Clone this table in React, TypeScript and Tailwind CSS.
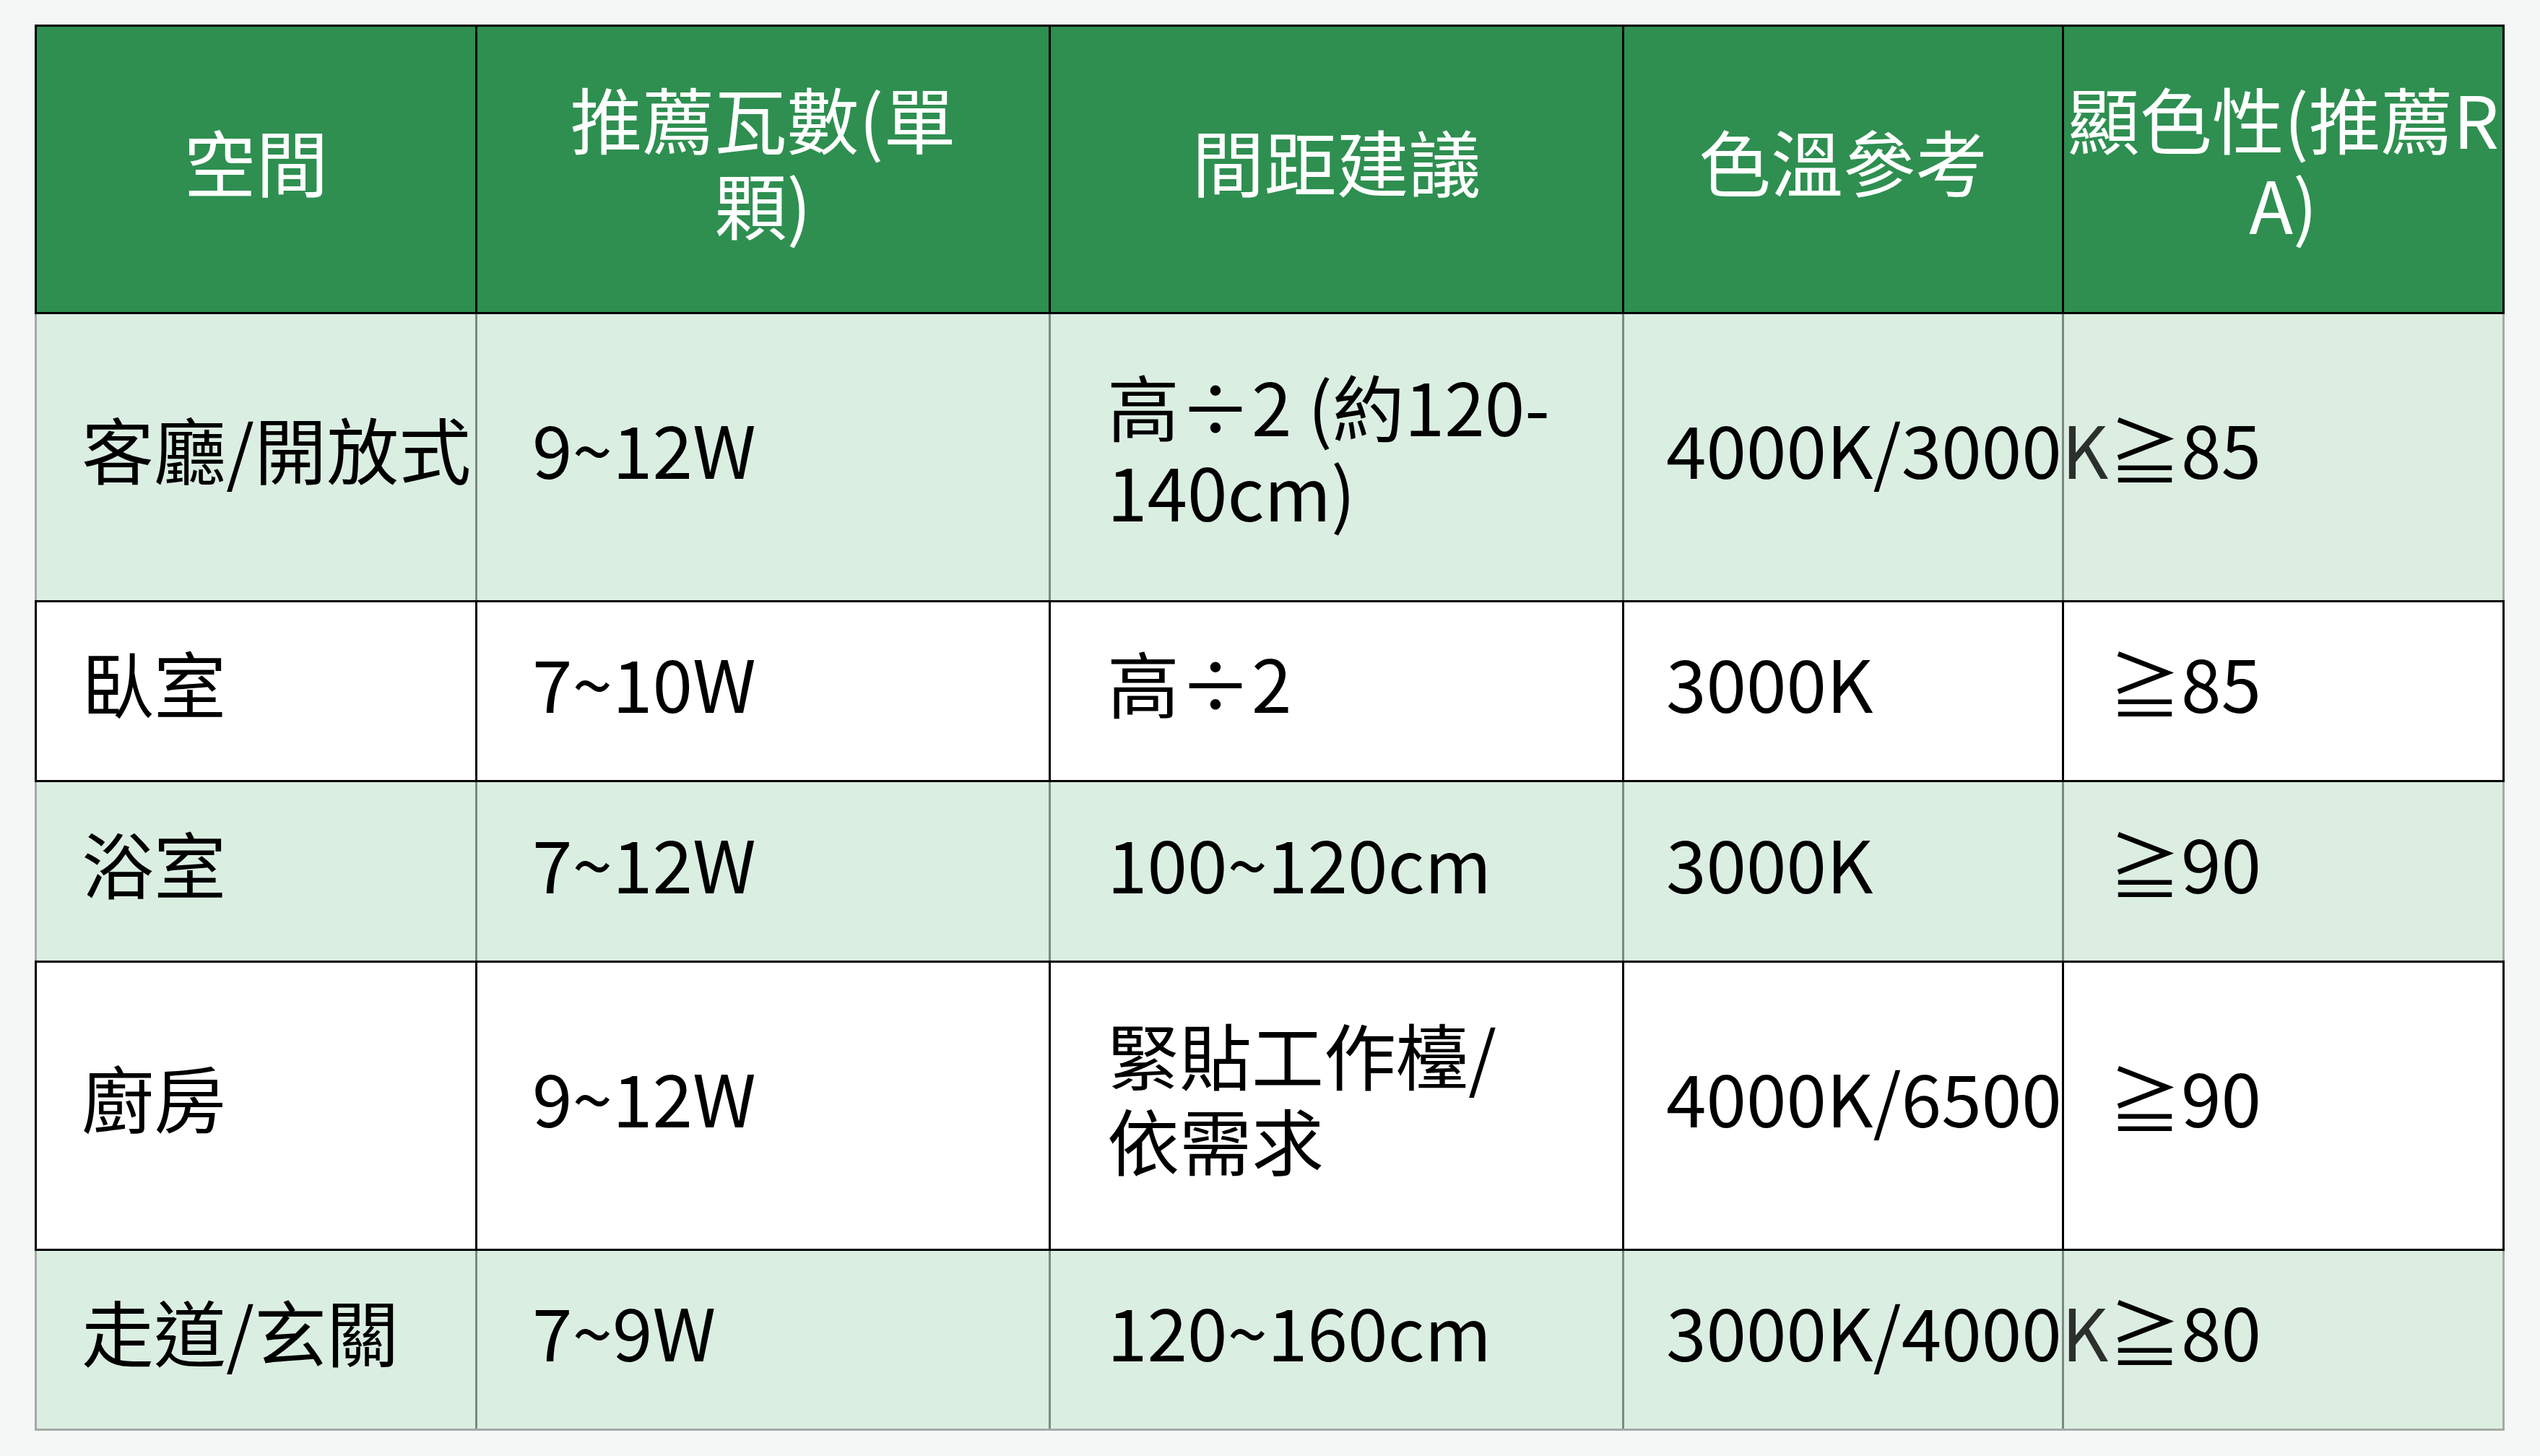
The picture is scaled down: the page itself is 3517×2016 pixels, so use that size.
import React from 'react'

// ---------------------------------------------------------------------------
// Table data
// ---------------------------------------------------------------------------

type Tone = 'mint' | 'white'

type Row = {
  tone: Tone
  height: string
  cells: string[]
  last?: boolean
}

const HEADERS = ['空間', '推薦瓦數(單顆)', '間距建議', '色溫參考', '顯色性(推薦RA)']

const ROWS: Row[] = [
  {
    tone: 'mint',
    height: 'h-[396px]',
    cells: ['客廳/開放式', '9~12W', '高÷2 (約120-140cm)', '4000K/3000K', '≧85'],
  },
  { tone: 'white', height: 'h-[252px]', cells: ['臥室', '7~10W', '高÷2', '3000K', '≧85'] },
  { tone: 'mint', height: 'h-[247px]', cells: ['浴室', '7~12W', '100~120cm', '3000K', '≧90'] },
  {
    tone: 'white',
    height: 'h-[402px]',
    cells: ['廚房', '9~12W', '緊貼工作檯/依需求', '4000K/6500K', '≧90'],
  },
  {
    tone: 'mint',
    height: 'h-[249px]',
    cells: ['走道/玄關', '7~9W', '120~160cm', '3000K/4000K', '≧80'],
    last: true,
  },
]

const GRID = 'grid grid-cols-[610px_794px_794px_609px_613px]'

// per-column padding (bottom padding nudges the text up a little, as in the shot)
const HEAD_PAD = [
  'px-[20px] pb-[26px]',
  'px-[70px] pb-[26px]',
  'px-[20px] pb-[26px]',
  'px-[20px] pb-[26px]',
  'px-[3px] pb-[26px] break-all',
]
const BODY_PAD = [
  'pl-[62px] pr-0 pb-[26px]',
  'pl-[76px] pr-[10px] pb-[26px]',
  'pl-[78px] pr-[78px] pb-[26px]',
  'pl-[58px] pr-[10px] pb-[26px]',
  'pl-[62px] pr-[10px] pb-[26px]',
]

// ---------------------------------------------------------------------------
// Rows
// ---------------------------------------------------------------------------

function HeaderRow() {
  return (
    <div className={`${GRID} h-[401px] border-y-[3px] border-black bg-[#2e8f50]`}>
      {HEADERS.map((h, i) => (
        <div
          key={h}
          className={`relative flex items-center justify-center border-l-[3px] border-black text-center text-white ${HEAD_PAD[i]} ${
            i === 4 ? 'border-r-[3px]' : ''
          }`}
        >
          <span>{h}</span>
        </div>
      ))}
    </div>
  )
}

function mintCellBorder(i: number) {
  if (i === 0) return 'border-l-[3px] border-[#a3aba6]'
  if (i === 4) return 'border-l-[3px] border-r-[3px] border-l-[#7b8a80] border-r-[#a3aba6] bg-[#dbeee2]/20'
  return 'border-l-[3px] border-[#7b8a80]'
}

function whiteCellBorder(i: number) {
  if (i === 4) return 'border-l-[3px] border-r-[3px] border-black bg-white'
  return 'border-l-[3px] border-black bg-white'
}

function BodyRow({ row }: { row: Row }) {
  const rowStyle =
    row.tone === 'mint'
      ? `bg-[#dbeee2] ${row.last ? 'border-b-[3px] border-[#a3aba6]' : ''}`
      : 'border-y-[3px] border-black bg-white'

  return (
    <div className={`${GRID} ${row.height} ${rowStyle}`}>
      {row.cells.map((c, i) => (
        <div
          key={i}
          className={`relative flex items-center text-black ${BODY_PAD[i]} ${
            row.tone === 'mint' ? mintCellBorder(i) : whiteCellBorder(i)
          }`}
        >
          <span className={i === 3 || i === 0 ? 'whitespace-nowrap' : ''}>{c}</span>
        </div>
      ))}
    </div>
  )
}

// ---------------------------------------------------------------------------
// Page
// ---------------------------------------------------------------------------

export default function App() {
  return (
    <div className="min-h-screen bg-[#f4f7f6] pl-[48px] pt-[34px] font-['Noto_Sans_CJK_TC','Noto_Sans',sans-serif] text-[100px] leading-[118px]">
      <div className="flex w-[3420px] flex-col">
        <HeaderRow />
        {ROWS.map((r, i) => (
          <BodyRow key={i} row={r} />
        ))}
      </div>
    </div>
  )
}
